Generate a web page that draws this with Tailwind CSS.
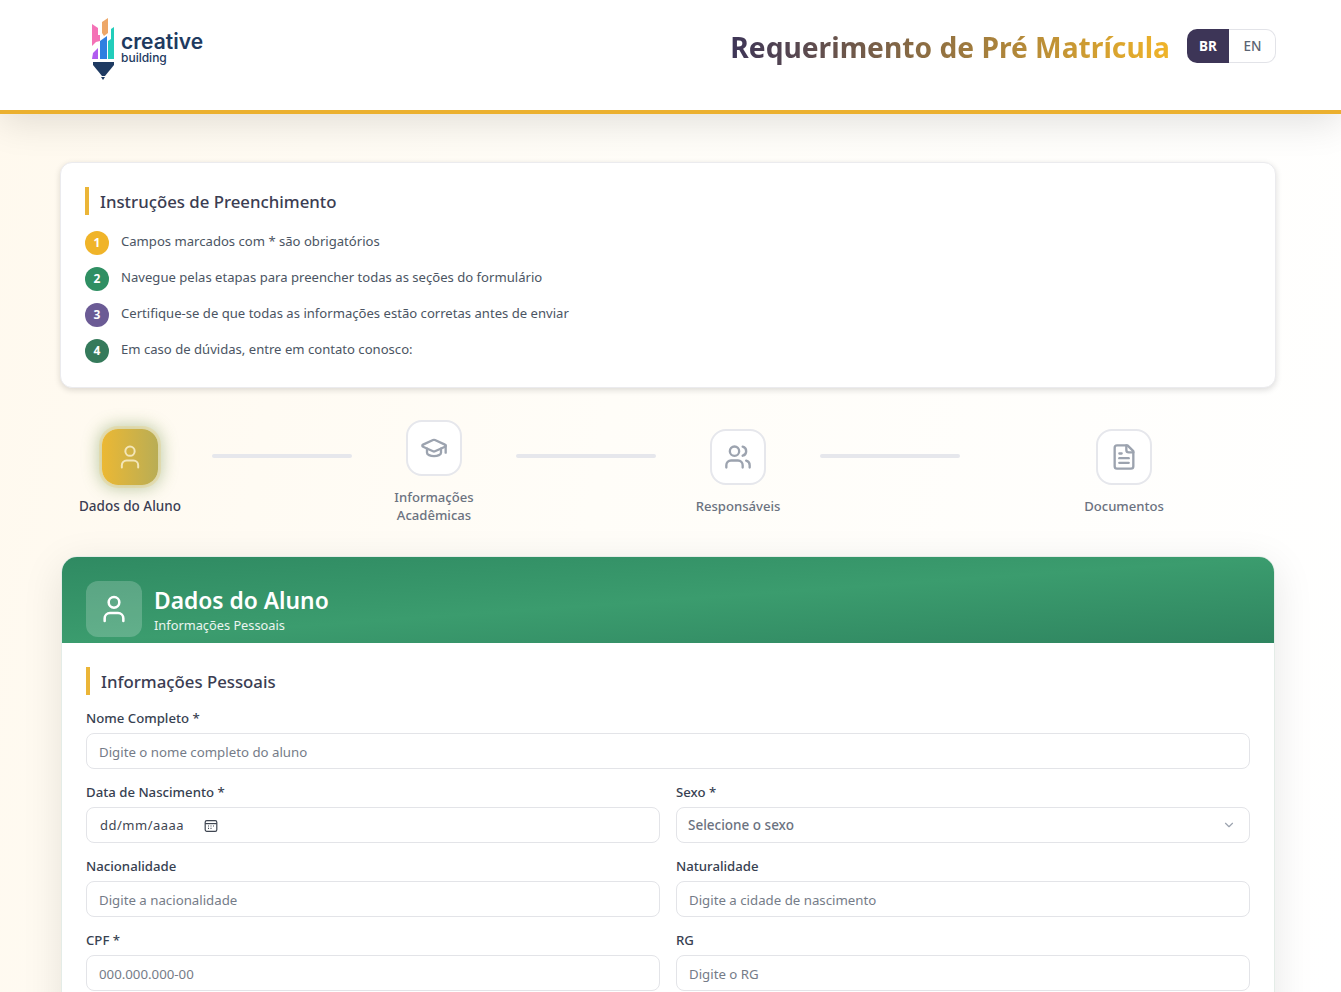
<!DOCTYPE html>
<html lang="pt-BR">
<head>
<meta charset="UTF-8" />
<title>Requerimento de Pré Matrícula</title>
<script src="https://cdn.jsdelivr.net/npm/@tailwindcss/browser@4"></script>
</head>
<body class="h-[992px] overflow-hidden bg-[linear-gradient(100deg,#fff9ee,#fffdf8_45%,#ffffff)] font-['Noto_Sans',sans-serif] text-[#3b3d52]">

<!-- header -->
<header class="relative z-10 h-[114px] border-b-4 border-[#ebb02f] bg-white shadow-[0_8px_36px_rgba(0,0,0,0.12)]">
  <div class="ml-[60px] flex h-[110px] w-[1216px] items-center justify-between">
    <div class="mb-[18px] ml-[31px] flex items-center">
      <svg width="25" height="64" viewBox="0 0 25 64" class="mt-[5px]">
        <path d="M1 7 L7 11 L7 18 L9 18 L9 24 L5 25 L1 29 Z" fill="#f472b6"/>
        <path d="M11 5 L17 1 L17 16 L13 19 L11 16 Z" fill="#eda768"/>
        <path d="M2 36 L7 31 L7 42 L1 42 Z" fill="#b05cf0"/>
        <path d="M9 24 L16 19 L16 42 L9 42 Z" fill="#2f80e0"/>
        <path d="M17 24 L20 22 L20 12 L23 10 L23 42 L17 42 Z" fill="#22cdbb"/>
        <path d="M2 45 L23 45 L23 48 L14 59 L11 59 L2 48 Z" fill="#1e3a62"/>
        <path d="M10 60 L14 60 L12 63 Z" fill="#1e3a62"/>
      </svg>
      <div class="ml-[5px] mt-[2px] flex flex-col font-['Inter',sans-serif] text-[#1e3a5f]">
        <span class="text-[21px] leading-[20px] font-semibold">creative</span>
        <span class="text-[12px] leading-[11px] font-medium">building</span>
      </div>
    </div>
    <div class="mb-[18px] flex items-center gap-[17px]">
      <h1 class="mt-[2px] bg-[linear-gradient(to_right,#3d3557,#f0b429)] bg-clip-text text-[28.2px] font-bold text-transparent">Requerimento de Pré Matrícula</h1>
      <div class="flex h-[34px] w-[89px] text-[13.5px]">
        <span class="flex w-[42px] items-center justify-center rounded-l-[10px] bg-[#3d3557] font-bold text-white">BR</span>
        <span class="flex flex-1 items-center justify-center rounded-r-[10px] border-y border-r border-[#e2e3e8] pl-px font-medium text-[#5b6472]">EN</span>
      </div>
    </div>
  </div>
</header>

<main class="ml-[60px] w-[1216px] pt-[48px]">
  <!-- instructions -->
  <section class="h-[226px] rounded-xl border border-[#ebebee] bg-white p-6 shadow-[0_2px_6px_rgba(0,0,0,0.14)]">
    <h2 class="flex h-[28px] items-center border-l-4 border-[#ebb537] pl-[11px] pt-[2px] text-[16.8px] font-medium">Instruções de Preenchimento</h2>
    <ul class="mt-4 flex flex-col gap-3 text-[13.1px] text-[#4b5563]">
      <li class="flex h-6 gap-3"><span class="flex size-6 shrink-0 items-center justify-center rounded-full bg-[#f0b429] text-[12px] font-bold text-white">1</span><span class="leading-[20px]">Campos marcados com * são obrigatórios</span></li>
      <li class="flex h-6 gap-3"><span class="flex size-6 shrink-0 items-center justify-center rounded-full bg-[#2f8f63] text-[12px] font-bold text-white">2</span><span class="leading-[20px]">Navegue pelas etapas para preencher todas as seções do formulário</span></li>
      <li class="flex h-6 gap-3"><span class="flex size-6 shrink-0 items-center justify-center rounded-full bg-[#6b5b95] text-[12px] font-bold text-white">3</span><span class="leading-[20px]">Certifique-se de que todas as informações estão corretas antes de enviar</span></li>
      <li class="flex h-6 gap-3"><span class="flex size-6 shrink-0 items-center justify-center rounded-full bg-[#357a5b] text-[12px] font-bold text-white">4</span><span class="leading-[20px]">Em caso de dúvidas, entre em contato conosco:</span></li>
    </ul>
  </section>

  <!-- stepper -->
  <nav class="mt-[32px] flex h-[104px] items-center">
    <div class="flex w-[140px] flex-col items-center gap-3 text-center">
      <div class="flex size-[56px] items-center justify-center rounded-2xl bg-[linear-gradient(to_right,#ebb834,#b9ad55)] shadow-[0_0_0_3px_rgba(240,190,70,0.2),0_0_16px_4px_rgba(100,140,60,0.4)]">
        <svg width="28" height="28" viewBox="0 0 24 24" fill="none" stroke="#f3e6b8" stroke-width="1.7" stroke-linecap="round" stroke-linejoin="round"><path d="M19 21v-2a4 4 0 0 0-4-4H9a4 4 0 0 0-4 4v2"/><circle cx="12" cy="7" r="4"/></svg>
      </div>
      <span class="text-[13.5px] leading-[18px] font-medium">Dados do Aluno</span>
    </div>
    <div class="mx-3 mb-[32px] h-1 w-[140px] self-center rounded-full bg-[#e6e7ec]"></div>
    <div class="flex w-[140px] flex-col items-center gap-3 text-center">
      <div class="flex size-[56px] items-center justify-center rounded-2xl border-2 border-[#e6e7ec] bg-white">
        <svg width="28" height="28" viewBox="0 0 24 24" fill="none" stroke="#9ca3af" stroke-width="2" stroke-linecap="round" stroke-linejoin="round"><path d="M21.42 10.92a1 1 0 0 0-.02-1.84L12.83 5.18a2 2 0 0 0-1.66 0L2.6 9.08a1 1 0 0 0 0 1.83l8.57 3.91a2 2 0 0 0 1.66 0z"/><path d="M22 10v6"/><path d="M6 12.5V16a6 3 0 0 0 12 0v-3.5"/></svg>
      </div>
      <span class="w-[100px] text-[13.1px] leading-[18px] font-medium text-[#6b7280]">Informações Acadêmicas</span>
    </div>
    <div class="mx-3 mb-[32px] h-1 w-[140px] self-center rounded-full bg-[#e6e7ec]"></div>
    <div class="flex w-[140px] flex-col items-center gap-3 text-center">
      <div class="flex size-[56px] items-center justify-center rounded-2xl border-2 border-[#e6e7ec] bg-white">
        <svg width="28" height="28" viewBox="0 0 24 24" fill="none" stroke="#9ca3af" stroke-width="2" stroke-linecap="round" stroke-linejoin="round"><path d="M16 21v-2a4 4 0 0 0-4-4H6a4 4 0 0 0-4 4v2"/><circle cx="9" cy="7" r="4"/><path d="M22 21v-2a4 4 0 0 0-3-3.87"/><path d="M16 3.13a4 4 0 0 1 0 7.75"/></svg>
      </div>
      <span class="text-[13.1px] leading-[18px] font-medium text-[#6b7280]">Responsáveis</span>
    </div>
    <div class="mx-3 mb-[32px] h-1 w-[140px] self-center rounded-full bg-[#e6e7ec]"></div>
    <div class="flex flex-1 flex-col items-center gap-3 text-center">
      <div class="flex size-[56px] items-center justify-center rounded-2xl border-2 border-[#e6e7ec] bg-white">
        <svg width="28" height="28" viewBox="0 0 24 24" fill="none" stroke="#9ca3af" stroke-width="2" stroke-linecap="round" stroke-linejoin="round"><path d="M15 2H6a2 2 0 0 0-2 2v16a2 2 0 0 0 2 2h12a2 2 0 0 0 2-2V7Z"/><path d="M14 2v4a2 2 0 0 0 2 2h4"/><path d="M10 9H8"/><path d="M16 13H8"/><path d="M16 17H8"/></svg>
      </div>
      <span class="text-[13.1px] leading-[18px] font-medium text-[#6b7280]">Documentos</span>
    </div>
  </nav>

  <!-- form card -->
  <section class="mx-px mt-[32px] h-[600px] overflow-hidden rounded-t-2xl border border-[#e4ece7] bg-white shadow-[0_10px_40px_rgba(0,0,0,0.1)]">
    <div class="flex h-[86px] items-start gap-3 bg-[linear-gradient(to_bottom_right,#2f8a62,#3b9c6e_50%,#2f8560)] pl-6 pt-6">
      <div class="flex size-[56px] items-center justify-center rounded-xl bg-white/20">
        <svg width="32" height="32" viewBox="0 0 24 24" fill="none" stroke="white" stroke-width="1.9" stroke-linecap="round" stroke-linejoin="round"><path d="M19 21v-2a4 4 0 0 0-4-4H9a4 4 0 0 0-4 4v2"/><circle cx="12" cy="7" r="4"/></svg>
      </div>
      <div class="mt-[4px] text-white">
        <h2 class="text-[22.8px] leading-[32px] font-semibold">Dados do Aluno</h2>
        <p class="mt-[-1px] text-[12.8px] leading-[18px] text-white/90">Informações Pessoais</p>
      </div>
    </div>
    <div class="px-6 pt-6">
      <h3 class="flex h-[28px] items-center border-l-4 border-[#ebb537] pl-[11px] pt-[2px] text-[16.8px] font-medium">Informações Pessoais</h3>
      <div class="mt-[13px] flex flex-col">
        <label class="text-[13.2px] leading-[20px] font-medium text-[#374151]">Nome Completo *</label>
        <input class="mt-[5px] h-[36px] w-full rounded-lg border border-[#e3e4e8] bg-white px-3 pt-px text-[13.25px] placeholder:text-[#757c88]" placeholder="Digite o nome completo do aluno" />
      </div>
      <div class="mt-[13px] grid grid-cols-2 gap-x-4 gap-y-[13px]">
        <div>
          <label class="block text-[13.2px] leading-[20px] font-medium text-[#374151]">Data de Nascimento *</label>
          <div class="mt-[5px] flex h-[36px] items-center gap-[20px] rounded-lg border border-[#e3e4e8] bg-white pl-[13px] pr-3 pt-px text-[13px] text-[#3f4652]">
            <span class="tracking-[0.5px]">dd/mm/aaaa</span>
            <svg width="14" height="14" viewBox="0 0 14 14" fill="none" stroke="#3f4652" stroke-width="1.2"><rect x="1.2" y="1.6" width="11.6" height="10.8" rx="1.6"/><path d="M1.2 4.6h11.6"/><path d="M4 7h1M6.5 7h1M9 7h1M4 9.4h1M6.5 9.4h1"/></svg>
          </div>
        </div>
        <div>
          <label class="block text-[13.2px] leading-[20px] font-medium text-[#374151]">Sexo *</label>
          <div class="relative mt-[5px]">
            <select class="h-[36px] w-full appearance-none rounded-lg border border-[#e3e4e8] bg-white pl-[11px] pr-3 pt-px text-[13.5px] font-medium text-[#6b7280]"><option>Selecione o sexo</option></select>
            <svg class="absolute right-[14px] top-[11px]" width="14" height="14" viewBox="0 0 24 24" fill="none" stroke="#9ca3af" stroke-width="2" stroke-linecap="round" stroke-linejoin="round"><path d="m6 9 6 6 6-6"/></svg>
          </div>
        </div>
        <div>
          <label class="block text-[13.2px] leading-[20px] font-medium text-[#374151]">Nacionalidade</label>
          <input class="mt-[5px] h-[36px] w-full rounded-lg border border-[#e3e4e8] bg-white px-3 pt-px text-[13.25px] placeholder:text-[#757c88]" placeholder="Digite a nacionalidade" />
        </div>
        <div>
          <label class="block text-[13.2px] leading-[20px] font-medium text-[#374151]">Naturalidade</label>
          <input class="mt-[5px] h-[36px] w-full rounded-lg border border-[#e3e4e8] bg-white px-3 pt-px text-[13.25px] placeholder:text-[#757c88]" placeholder="Digite a cidade de nascimento" />
        </div>
        <div>
          <label class="block text-[13.2px] leading-[20px] font-medium text-[#374151]">CPF *</label>
          <input class="mt-[5px] h-[36px] w-full rounded-lg border border-[#e3e4e8] bg-white px-3 pt-px text-[13.25px] placeholder:text-[#757c88]" placeholder="000.000.000-00" />
        </div>
        <div>
          <label class="block text-[13.2px] leading-[20px] font-medium text-[#374151]">RG</label>
          <input class="mt-[5px] h-[36px] w-full rounded-lg border border-[#e3e4e8] bg-white px-3 pt-px text-[13.25px] placeholder:text-[#757c88]" placeholder="Digite o RG" />
        </div>
      </div>
    </div>
  </section>
</main>
</body>
</html>
